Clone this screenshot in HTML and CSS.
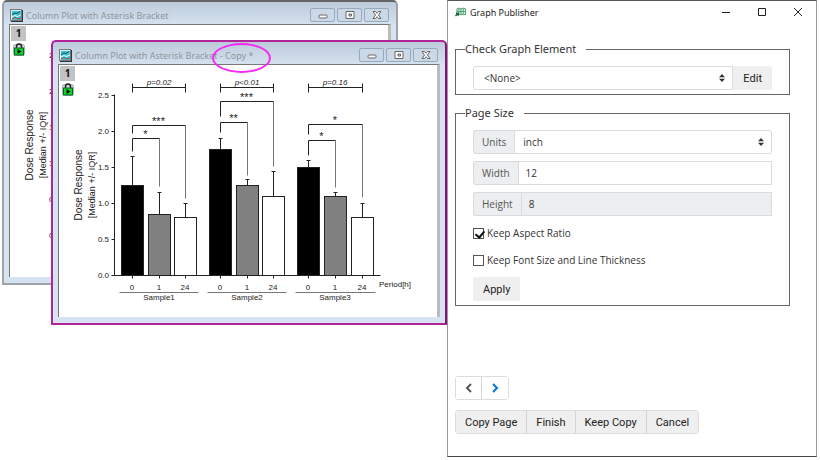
FILE: index.html
```
<!DOCTYPE html>
<html lang="en">

<head>
    <meta charset="UTF-8">
    <title>Graph Publisher</title>
    <link rel="stylesheet" href="styles.css">
</head>

<body>
    <!-- icons shared by both graph windows -->
    <svg class="defs" width="0" height="0">
        <symbol id="icon-graph" viewBox="0 0 13 13">
            <rect x="1" y="1" width="12" height="12" fill="#333"/>
            <rect x="0.5" y="0.5" width="11" height="11" fill="#d8f4f6" stroke="#777"/>
            <rect x="2" y="2" width="9" height="9" fill="#3fc4cc"/>
            <path d="M2 5.500 L5 4 L7 4.500 L10 2.500" fill="none" stroke="#0b4f70"/>
            <path d="M2 8 L5 6.500 L7 7.500 L11 6" fill="none" stroke="#e6ffff"/>
            <path d="M2 10 L5 8.500 L8 10 L11 9" fill="none" stroke="#b03a50"/>
        </symbol>
        <symbol id="icon-lock" viewBox="0 0 12 13">
            <rect x="0.5" y="1.500" width="11" height="11" rx="2" fill="#d8d8d8" stroke="#aaa"/>
            <path d="M3.500 6 V3.500 Q3.500 1 6 1 Q8.500 1 8.500 3.500 V6" fill="none" stroke="#222" stroke-width="1.500"/>
            <rect x="1.500" y="5" width="9" height="7" fill="#10d820" stroke="#063"/>
            <path d="M4.500 6 L8.500 8.500 L4.500 11 Z" fill="#000"/>
        </symbol>
        <symbol id="icon-min" viewBox="0 0 12 10">
            <rect x="2" y="5" width="8" height="3" rx="1" fill="#fff" stroke="#666"/>
        </symbol>
        <symbol id="icon-max" viewBox="0 0 12 10">
            <path d="M2 1.500 H10 V8.500 H2 Z M5 4 V6 H7.500 V4 Z" fill="#fff" fill-rule="evenodd" stroke="#666"/>
        </symbol>
        <symbol id="icon-close" viewBox="0 0 12 10">
            <path d="M2 1.500 H4.500 L6 3.300 L7.500 1.500 H10 L7.500 5 L10 8.500 H7.500 L6 6.700 L4.500 8.500 H2 L4.500 5 Z" fill="#fff" stroke="#666"/>
        </symbol>
    </svg>

    <main>
        <section class="workspace">
            <div class="window back">
                <header>
                    <svg class="app-icon"><use href="#icon-graph"/></svg>
                    <h2>Column Plot with Asterisk Bracket</h2>
                    <button type="button" aria-label="Minimize"><svg><use href="#icon-min"/></svg></button>
                    <button type="button" aria-label="Maximize"><svg><use href="#icon-max"/></svg></button>
                    <button type="button" aria-label="Close"><svg><use href="#icon-close"/></svg></button>
                </header>
                <div class="page">
                    <div class="layer">
                        <button type="button">1</button>
                        <svg><use href="#icon-lock"/></svg>
                    </div>
                    <svg class="chart" viewBox="1 0 378 252"></svg>
                </div>
            </div>

            <div class="window front">
                <header>
                    <svg class="app-icon"><use href="#icon-graph"/></svg>
                    <h2>Column Plot with Asterisk Bracket <span class="marked">- Copy *</span></h2>
                    <button type="button" aria-label="Minimize"><svg><use href="#icon-min"/></svg></button>
                    <button type="button" aria-label="Maximize"><svg><use href="#icon-max"/></svg></button>
                    <button type="button" aria-label="Close"><svg><use href="#icon-close"/></svg></button>
                </header>
                <div class="page">
                    <div class="layer">
                        <button type="button">1</button>
                        <svg><use href="#icon-lock"/></svg>
                    </div>
                    <svg class="chart" viewBox="1 0 378 252"></svg>
                </div>
            </div>
        </section>

        <form class="publisher">
            <header>
                <svg class="logo" viewBox="0 0 13 11">
                    <path d="M2.500 8.500 V2 Q5 0.500 7 2 Q9.500 0.500 12 2 V8.500 Q9.500 7.500 7 8.500 Q5 7.500 2.500 8.500 Z M7 2 V8.500 M2.500 5 H12 M4.700 1.500 V8 M9.500 1.500 V8" fill="#dff3e6" stroke="#4a9a6a"/>
                    <path d="M1 10 L4 7 M1.500 7 H4 V9.500" fill="none" stroke="#175c33" stroke-width="1.500"/>
                </svg>
                <h1>Graph Publisher</h1>
                <button type="button" aria-label="Minimize"><svg viewBox="0 0 10 10"><path d="M1 5.500 H9"/></svg></button>
                <button type="button" aria-label="Maximize"><svg viewBox="0 0 10 10"><path d="M1.500 1.500 H8.500 V8.500 H1.500 Z"/></svg></button>
                <button type="button" aria-label="Close"><svg viewBox="0 0 10 10"><path d="M1 1 L9 9 M9 1 L1 9"/></svg></button>
            </header>

            <fieldset>
                <legend>Check Graph Element</legend>
                <div class="group">
                    <div class="select">
                        <select aria-label="Graph element"><option>&lt;None&gt;</option></select>
                        <svg viewBox="0 0 6 8"><path d="M0 3.300 L3 0 L6 3.300 Z M0 4.700 L3 8 L6 4.700 Z"/></svg>
                    </div>
                    <button type="button" class="btn">Edit</button>
                </div>
            </fieldset>

            <fieldset>
                <legend>Page Size</legend>
                <div class="group">
                    <label for="units">Units</label>
                    <div class="select">
                        <select id="units"><option>inch</option></select>
                        <svg viewBox="0 0 6 8"><path d="M0 3.300 L3 0 L6 3.300 Z M0 4.700 L3 8 L6 4.700 Z"/></svg>
                    </div>
                </div>
                <div class="group">
                    <label for="width">Width</label>
                    <input type="text" id="width" value="12">
                </div>
                <div class="group">
                    <label for="height">Height</label>
                    <input type="text" id="height" value="8" disabled>
                </div>
                <div class="check">
                    <input type="checkbox" id="ratio" checked>
                    <label for="ratio">Keep Aspect Ratio</label>
                </div>
                <div class="check">
                    <input type="checkbox" id="font">
                    <label for="font">Keep Font Size and Line Thickness</label>
                </div>
                <button type="button" class="btn">Apply</button>
            </fieldset>

            <footer>
                <div class="pager">
                    <button type="button" aria-label="Previous"><svg viewBox="0 0 8 10"><path d="M6 1 L2 5 L6 9"/></svg></button>
                    <button type="button" class="next" aria-label="Next"><svg viewBox="0 0 8 10"><path d="M2 1 L6 5 L2 9"/></svg></button>
                </div>
                <div class="actions">
                    <button type="button">Copy Page</button>
                    <button type="button">Finish</button>
                    <button type="button">Keep Copy</button>
                    <button type="button">Cancel</button>
                </div>
            </footer>
        </form>
    </main>

    <script src="chart.js"></script>
</body>

</html>
```
FILE: styles.css
```
* {
    box-sizing: border-box;
}

body {
    margin: 0;
    background: #fff;
    font-family: "Open Sans", "Noto Sans", sans-serif;
    font-size: 10px;
    color: #333;
}

h1, h2, legend {
    font-family: "Noto Sans", "Open Sans", sans-serif;
}

h1, h2 {
    margin: 0;
    font-size: 9px;
    font-weight: normal;
    white-space: nowrap;
}

button, input, select {
    font: inherit;
    color: inherit;
    margin: 0;
}

svg {
    display: block;
}

.defs {
    position: absolute;
}

main {
    display: flex;
    min-height: 457px;
    margin-right: 3px;
}

.workspace {
    position: relative;
    flex: 0 0 447px;
}

/* graph windows */
.window {
    position: absolute;
    width: 396px;
    padding: 0 5px 6px;
    background: linear-gradient(#bccbdb, #d6e3f0 24px);
    border: 2px solid #a0a4aa;
    border-top-color: #666;
    border-radius: 5px 5px 0 0;
}

.window.back {
    left: 2px;
    top: 0;
}

.window.front {
    left: 51px;
    top: 40px;
    border-color: #b0259a;
    border-right-color: #8a1078;
}

.window header {
    display: flex;
    align-items: center;
    gap: 2px;
    height: 22px;
    padding: 4px 2px 0 0;
}

.window h2 {
    flex: 1;
    color: #8d959e;
}

.app-icon {
    width: 13px;
    height: 13px;
    margin: 0 1px;
}

.window header button {
    display: flex;
    align-items: center;
    justify-content: center;
    width: 25px;
    height: 14px;
    padding: 0;
    background: #cbd8e6;
    border: 1px solid #98a8bf;
    border-radius: 2px;
}

.window header button svg {
    width: 12px;
    height: 10px;
}

.marked {
    position: relative;
}

.marked::after {
    content: "";
    position: absolute;
    z-index: 1;
    left: -8px;
    top: -6px;
    width: 55px;
    height: 26px;
    border: 2px solid #f828f8;
    border-radius: 50%;
}

.page {
    position: relative;
    background: #fff;
    border-top: 1px solid #777;
    border-left: 1px solid #777;
    border-right: 3px solid #bbb;
}

.layer {
    position: absolute;
    left: 1px;
    top: 1px;
}

.layer button {
    display: block;
    width: 15px;
    height: 15px;
    padding: 0;
    background: #c3c3c3;
    border: 0;
    font: bold 10px/15px "Noto Sans", sans-serif;
    color: #111;
}

.layer svg {
    width: 12px;
    height: 13px;
    margin: 2px;
}

.chart {
    width: 100%;
    font-family: "Liberation Sans", Arial, sans-serif;
    font-size: 8px;
    fill: #222;
}

.chart .line {
    fill: none;
    stroke: #222;
}

.chart .drop {
    fill: none;
    stroke: #777;
}

.chart .p {
    font-style: italic;
}

.chart .star {
    font-size: 11px;
}

.chart .title {
    font-size: 10px;
}

.chart .subtitle {
    font-size: 9px;
}

/* publisher dialog */
.publisher {
    flex: 1;
    display: flex;
    flex-direction: column;
    gap: 10px;
    padding: 0 26px 22px 7px;
    border: 1px solid #999;
    border-top-color: #555;
    border-bottom-color: #444;
    background: #fff;
}

.publisher header {
    display: flex;
    align-items: center;
    height: 22px;
    margin: 0 -26px 8px -1px;
}

.logo {
    width: 13px;
    height: 11px;
}

h1 {
    flex: 1;
    padding-left: 3px;
    color: #222;
}

.publisher header button {
    width: 36px;
    padding: 0;
    border: 0;
    background: none;
}

.publisher header svg {
    height: 10px;
    margin: 0 auto;
}

.publisher header button svg {
    fill: none;
    stroke: #222;
}

fieldset {
    min-width: 0;
    margin: 0;
    padding: 9px 17px 4px;
    border: 1px solid #666;
}

legend {
    margin-left: -8px;
    padding: 0 10px 0 0;
    background: #fff;
    font-size: 11px;
    line-height: 16px;
}

.group {
    display: flex;
    height: 24px;
    margin-bottom: 7px;
}

fieldset:first-of-type .group {
    margin-bottom: 0;
}

.group label {
    padding: 0 8px;
    background: #eceeef;
    border: 1px solid #d8dadc;
    border-right: 0;
    border-radius: 3px 0 0 3px;
    line-height: 23px;
    color: #555;
}

.group input, .group select {
    width: 100%;
    min-width: 0;
    padding: 0 8px;
    background: #fff;
    border: 1px solid #d8dadc;
    border-radius: 0 3px 3px 0;
}

.group input {
    flex: 1;
    padding: 0 7px;
    border-radius: 0;
}

.group input:disabled {
    background: #eceeef;
}

.select {
    position: relative;
    flex: 1;
}

.select select {
    height: 100%;
    appearance: none;
}

.select svg {
    position: absolute;
    right: 8px;
    top: 8px;
    width: 6px;
    height: 8px;
    fill: #333;
    pointer-events: none;
}

fieldset:first-of-type select {
    padding-left: 10px;
    border-radius: 3px 0 0 3px;
}

.btn {
    height: 24px;
    padding: 0 10px;
    background: #efefef;
    border: 0;
    border-radius: 2px;
    font-family: Roboto, sans-serif;
    font-size: 11px;
    color: #222;
}

.check {
    display: flex;
    align-items: center;
    gap: 3px;
    height: 20px;
    margin-bottom: 7px;
}

.check input {
    position: relative;
    appearance: none;
    width: 11px;
    height: 11px;
    border: 1px solid #555;
    background: #fff;
}

.check input:checked::after {
    content: "";
    position: absolute;
    left: 3px;
    top: 0;
    width: 4px;
    height: 7px;
    border: solid #111;
    border-width: 0 2px 2px 0;
    transform: rotate(40deg);
}

footer {
    margin-top: auto;
}

.pager, .actions {
    display: flex;
    width: max-content;
    border: 1px solid #ddd;
    border-radius: 3px;
}

.pager {
    margin-bottom: 10px;
}

.pager button, .actions button {
    height: 22px;
    padding: 0 9px;
    background: #efefef;
    border: 0;
    border-right: 1px solid #d4d4d4;
    font-family: Roboto, sans-serif;
    font-size: 11px;
    color: #222;
}

.pager button {
    width: 26px;
    padding: 0;
    background: #fff;
}

.pager button:last-child, .actions button:last-child {
    border-right: 0;
}

.pager svg {
    width: 8px;
    height: 10px;
    margin: 0 auto;
    fill: none;
    stroke: #555;
    stroke-width: 2;
}

.pager .next svg {
    stroke: #0275d8;
}
```
FILE: chart.js
```
// x positions and brackets are in viewBox units, bars and errors in data units
var base = 210;
var unit = 72;
var colors = ['#000', '#808080', '#fff'];
var periods = ['0', '1', '24'];
var samples = [
    {
        name: 'Sample1', p: 'p=0.02', x: [74, 101, 127],
        bars: [1.25, 0.85, 0.8], errors: [1.65, 1.15, 1],
        brackets: [[60, 68, 133, 2, '***'], [73, 86, 121, 1, '*']]
    },
    {
        name: 'Sample2', p: 'p<0.01', x: [162, 189, 215],
        bars: [1.75, 1.25, 1.1], errors: [1.9, 1.33, 1.45],
        brackets: [[36, 51, 101, 2, '***'], [57, 67, 110, 1, '**']]
    },
    {
        name: 'Sample3', p: 'p=0.16', x: [250, 277, 304],
        bars: [1.5, 1.1, 0.8], errors: [1.6, 1.15, 1],
        brackets: [[59, 69, 132, 2, '*'], [75, 90, 122, 1, '*']]
    }
];

function toY(value) {
    return Math.round(base - value * unit);
}

function line(d, name) {
    return '<path class="' + (name || 'line') + '" transform="translate(0.5 0.5)" d="' + d + '"/>';
}

function text(x, y, value, anchor, name) {
    return '<text x="' + x + '" y="' + y + '" text-anchor="' + anchor + '" class="' + (name || '') + '">' +
        value.replace('<', '&lt;') + '</text>';
}

function draw() {
    var out = '';
    // axes
    out += line('M56 29 V' + base + ' H322');
    for (var v = 0; v <= 2.5; v += 0.5) {
        out += line('M53 ' + toY(v) + ' H56');
        out += text(51, toY(v) + 3, v.toFixed(1), 'end');
    }
    out += '<g transform="translate(24 120) rotate(-90)">' + text(0, 0, 'Dose Response', 'middle', 'title') + '</g>';
    out += '<g transform="translate(37 120) rotate(-90)">' + text(0, 0, '[Median +/- IQR]', 'middle', 'subtitle') + '</g>';

    samples.forEach(function(s) {
        var x = s.x;
        s.bars.forEach(function(bar, i) {
            var top = toY(bar);
            out += '<rect x="' + (x[i] - 10.5) + '" y="' + (top + 0.5) + '" width="22" height="' + (base - top) +
                '" fill="' + colors[i] + '" stroke="#222"/>';
            out += line('M' + x[i] + ' ' + toY(s.errors[i]) + ' V' + top);
            out += line('M' + (x[i] - 2) + ' ' + toY(s.errors[i]) + ' h4');
            out += line('M' + x[i] + ' ' + base + ' v3');
            out += text(x[i], 225, periods[i], 'middle');
        });
        // significance brackets: [top, left end, right end, bar, stars]
        s.brackets.forEach(function(b) {
            var right = x[b[3]];
            out += line('M' + right + ' ' + b[0] + ' V' + b[2], 'drop');
            out += line('M' + x[0] + ' ' + b[1] + ' V' + b[0] + ' H' + right);
            out += text((x[0] + right) / 2, b[0], b[4], 'middle', 'star');
        });
        out += line('M' + x[0] + ' 18 v9 M' + x[2] + ' 18 v9 M' + x[0] + ' 22 H' + x[2]);
        out += text(x[1], 20, s.p, 'middle', 'p');
        out += line('M' + (x[0] - 13) + ' 227 H' + (x[2] + 13), 'drop');
        out += text(x[1], 235, s.name, 'middle');
    });
    out += text(321, 222, 'Period[h]', 'start');
    return out;
}

document.querySelectorAll('.chart').forEach(function(svg) {
    svg.innerHTML = draw();
});
```
